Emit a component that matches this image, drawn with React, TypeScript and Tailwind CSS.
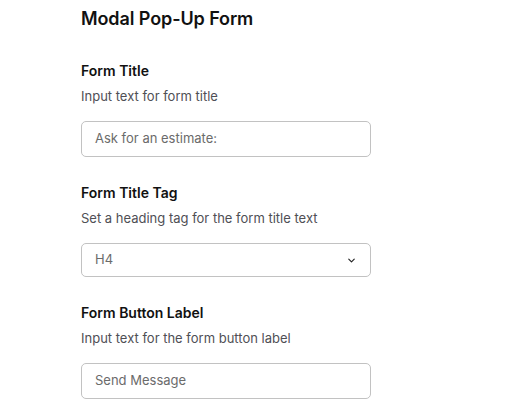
import { ChevronDown } from "lucide-react";

type Field = {
  label: string;
  help: string;
  value: string;
  kind: "input" | "select";
};

const FIELDS: Field[] = [
  { label: "Form Title", help: "Input text for form title", value: "Ask for an estimate:", kind: "input" },
  { label: "Form Title Tag", help: "Set a heading tag for the form title text", value: "H4", kind: "select" },
  { label: "Form Button Label", help: "Input text for the form button label", value: "Send Message", kind: "input" }
];

export default function App() {
  return (
    <div className="min-h-[414px] w-[522px] bg-white pl-[81px] pt-[7px] font-['Inter',sans-serif]">
      <h2 className="text-[18px] leading-[24px] font-semibold tracking-[-0.1px] text-[#111]">
        Modal Pop-Up Form
      </h2>

      <div className="mt-[30px] flex w-[290px] flex-col gap-[26px]">
        {FIELDS.map((f) => (
          <div key={f.label} className="flex flex-col">
            <label className="text-[14px] leading-[20px] font-semibold text-[#111]">{f.label}</label>
            <p className="mt-[5px] text-[13px] leading-[20px] text-[#4f4f55]">{f.help}</p>
            {f.kind === "input" ? (
              <div className="mt-[15px] flex h-[36px] items-center rounded-[5px] border border-[#c2c2c2] px-[13px] text-[13px] text-[#6b6b6b]">
                {f.value}
              </div>
            ) : (
              <div className="mt-[15px] flex h-[34px] items-center justify-between rounded-[5px] border border-[#c2c2c2] pl-[13px] pr-[13px] text-[13px] text-[#6b6b6b]">
                <span>{f.value}</span>
                <ChevronDown className="h-[11px] w-[11px] text-[#222]" strokeWidth={2.5} />
              </div>
            )}
          </div>
        ))}
      </div>
    </div>
  );
}
